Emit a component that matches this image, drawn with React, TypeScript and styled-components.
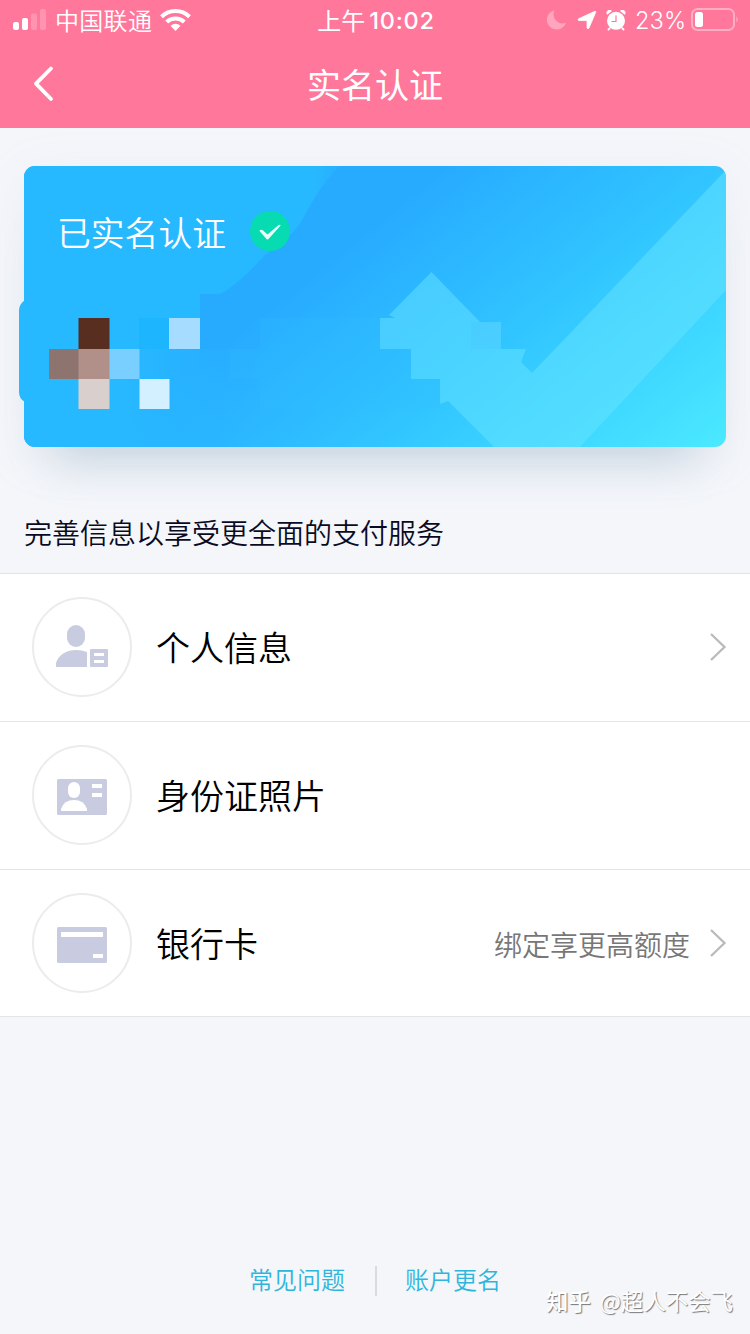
import React from "react";
import styled, { createGlobalStyle } from "styled-components";

const GlobalStyle = createGlobalStyle`
  * { box-sizing: border-box; }
  body {
    margin: 0;
    background: #f4f6fa;
    font-family: "Noto Sans CJK SC", sans-serif;
  }
`;

const Screen = styled.div`
  width: 750px;
  height: 1334px;
  display: flex;
  flex-direction: column;
  overflow: hidden;
  background: #f4f6fa;
`;

const Header = styled.header`
  height: 128px;
  flex: none;
  background: #ff779b;
  color: #fff;
`;

const StatusBar = styled.div`
  height: 40px;
  display: grid;
  grid-template-columns: 1fr auto 1fr;
  align-items: center;
  padding: 0 11px 0 13px;
`;

const StatusGroup = styled.div<{ $end?: boolean }>`
  display: flex;
  align-items: center;
  justify-content: ${(p) => (p.$end ? "flex-end" : "flex-start")};
`;

const Carrier = styled.span`
  margin: 0 8px 1px 9px;
  font-size: 24px;
  font-weight: 350;
  line-height: 36px;
  letter-spacing: 0.3px;
`;

const Clock = styled.span`
  display: flex;
  align-items: center;
  gap: 4px;
  margin-bottom: 1px;
  font-size: 24px;
  font-weight: 400;
  line-height: 36px;
`;

const Digits = styled.span`
  margin-top: 2px;
  font-family: Inter, "Noto Sans CJK SC", sans-serif;
  font-size: 23.5px;
  font-weight: 500;
  letter-spacing: 0.8px;
`;

const Battery = styled.span`
  margin: 2px 5px 0 9px;
  font-family: Inter, sans-serif;
  font-size: 23.6px;
  font-weight: 300;
  line-height: 36px;
`;

const NavBar = styled.nav`
  height: 88px;
  display: grid;
  grid-template-columns: 80px 1fr 80px;
  align-items: center;
`;

const BackButton = styled.button`
  display: flex;
  padding: 0 0 0 31px;
  border: 0;
  background: none;
`;

const Title = styled.h1`
  margin: 0;
  text-align: center;
  font-size: 34px;
  font-weight: 400;
  line-height: 48px;
`;

const Card = styled.section`
  display: grid;
  flex: none;
  height: 281px;
  margin: 38px 24px 0;
  border-radius: 11px;
  box-shadow: 0 42px 44px -30px rgba(105, 145, 175, 0.32),
    0 10px 50px rgba(175, 180, 200, 0.12);
`;

const CardArt = styled.svg`
  grid-area: 1 / 1;
  width: 707px;
  height: 281px;
  margin-left: -5px;
`;

const CardHeading = styled.div`
  grid-area: 1 / 1;
  z-index: 1;
  display: flex;
  align-items: center;
  align-self: start;
  gap: 24px;
  padding: 39px 0 0 33px;
  color: #fff;
`;

const CardTitle = styled.h2`
  margin: 2px 0 0;
  font-size: 33.8px;
  font-weight: 350;
  line-height: 50px;
`;

const Hint = styled.p`
  flex: none;
  height: 126px;
  margin: 0;
  padding: 63px 24px 0;
  color: #0a0b22;
  font-size: 28px;
  font-weight: 350;
  line-height: 44px;
`;

const List = styled.ul`
  flex: none;
  margin: 0;
  padding: 0;
  list-style: none;
  background: #fff;
  border-top: 1px solid #e1e3e6;
`;

const Row = styled.li`
  display: flex;
  align-items: center;
  height: 148px;
  padding: 0 23px 1px 32px;
  border-bottom: 1px solid #e4e5e8;

  &:last-child {
    height: 147px;
    padding-bottom: 0;
  }
`;

const IconRing = styled.span`
  display: flex;
  align-items: center;
  justify-content: center;
  width: 100px;
  height: 100px;
  border: 2px solid #ececef;
  border-radius: 50%;
`;

const RowLabel = styled.span`
  flex: 1;
  margin: 0 0 1px 24px;
  color: #000;
  font-size: 34px;
  font-weight: 350;
  line-height: 50px;
`;

const RowNote = styled.span`
  margin: 1px 19px 0 0;
  color: #777;
  font-size: 28px;
  font-weight: 350;
  line-height: 42px;
`;

const Footer = styled.footer`
  display: flex;
  justify-content: center;
  align-items: center;
  margin-top: 244px;
  height: 36px;
`;

const FooterLink = styled.a`
  color: #2fb5dc;
  font-size: 24px;
  line-height: 36px;
  font-weight: 350;
`;

const Divider = styled.span`
  width: 2px;
  height: 30px;
  margin: 3px 28px 0 30px;
  background: #d9dbe0;
`;

const Watermark = styled.div`
  display: flex;
  gap: 9px;
  justify-content: flex-end;
  margin-top: -14px;
  padding-right: 17px;
  color: #fff;
  font-size: 22.4px;
  line-height: 34px;
  text-shadow: 1px 1px 1px #777;
`;

const Brand = styled.span`
  font-weight: 500;
`;

const Signal = () => (
  <svg width="33" height="22" viewBox="0 0 33 22" fill="#fff">
    <rect x="0" y="13" width="6" height="8" rx="2" />
    <rect x="9" y="9" width="6" height="12" rx="2" />
    <rect x="18" y="4.500" width="6" height="16.500" rx="2" opacity=".22" />
    <rect x="27" y="0" width="6" height="21" rx="2" opacity=".22" />
  </svg>
);

const Wifi = () => (
  <svg width="31" height="22" viewBox="0 0 31 22" fill="none" stroke="#fff" strokeWidth="4">
    <path d="M1.500 7.800a20 20 0 0 1 28 0" />
    <path d="M6.700 13a12.500 12.500 0 0 1 17.600 0" />
    <path d="M15.500 22l-5-5.200q5-4 10 0z" fill="#fff" stroke="none" />
  </svg>
);

const Moon = () => (
  <svg width="20" height="22" viewBox="0 0 20 22">
    <path d="M7.500 1.200A9.800 9.800 0 1 0 19 13.800 9.200 9.200 0 0 1 7.500 1.200z" fill="#fff" opacity=".35" />
  </svg>
);

const Arrow = () => (
  <svg width="20" height="20" viewBox="0 0 20 20" style={{ marginLeft: 10 }}>
    <path d="M1.500 8.800L17.500 1.500q1.700-.6 1.100 1.100L12 18q-1.200 1.700-2-.2V10.600H2.100q-2-.4-.6-1.800z" fill="#fff" stroke="#fff" strokeWidth=".8" />
  </svg>
);

const Alarm = () => (
  <svg width="20" height="21" viewBox="0 0 20 21" style={{ marginLeft: 9 }}>
    <path d="M3.500 18.500L2.500 19.500M16.500 18.500l1 1" stroke="#fff" strokeWidth="2" strokeLinecap="round" />
    <path d="M1.200 4.800A3 3 0 0 1 6 1zM18.800 4.800A3 3 0 0 0 14 1z" fill="#fff" />
    <circle cx="10" cy="10.800" r="9" fill="#fff" />
    <path d="M10 5.500v6H5.500" fill="none" stroke="#ff779b" strokeWidth="1.200" />
  </svg>
);

const BatteryIcon = () => (
  <svg width="48" height="24" viewBox="0 0 48 24">
    <rect x="1" y="1" width="42" height="21" rx="5.500" fill="none" stroke="#fff" strokeWidth="2" opacity=".4" />
    <rect x="4" y="4" width="8" height="15" rx="2.500" fill="#fff" />
    <path d="M45.500 8.500q2.500 3 0 6z" fill="#fff" opacity=".5" />
  </svg>
);

const Back = () => (
  <svg width="24" height="38" viewBox="0 0 24 38" fill="none" stroke="#fff" strokeWidth="3.800" strokeLinecap="round" strokeLinejoin="round">
    <path d="M20 3.500L5 18.700l15 15.300" />
  </svg>
);

const Verified = () => (
  <svg width="40" height="40" viewBox="0 0 40 40">
    <circle cx="20" cy="20" r="20" fill="#06dbb1" />
    <path d="M9.500 20q.5-2 3-.9l5 4.300L28.600 14q2-.8 2 .6L18.500 28q-1 1-2 0z" fill="#e9fff9" />
  </svg>
);

const Chevron = () => (
  <svg width="18" height="30" viewBox="0 0 18 30" fill="none" stroke="#b9babd" strokeWidth="2.300">
    <path d="M2 2l13.500 13L2 28" />
  </svg>
);

const PersonIcon = () => (
  <svg width="52" height="42" viewBox="0 0 52 42" fill="#c9cce0" style={{ marginTop: -2 }}>
    <rect x="11" y="0" width="18" height="22" rx="9" />
    <path d="M0 42v-4C3 29 11 25 20 25q6 0 11 2v15z" />
    <path fillRule="evenodd" d="M35 24h16q1 0 1 1v16q0 1-1 1H35q-1 0-1-1V25q0-1 1-1zm3 4v3h10v-3zm0 7v3h10v-3z" />
  </svg>
);

const IdCardIcon = () => (
  <svg width="50" height="36" viewBox="0 0 50 36" style={{ marginTop: 4 }}>
    <rect width="50" height="36" rx="1.500" fill="#c9cce0" />
    <g fill="#fff">
      <rect x="11" y="3" width="12" height="16" rx="6" />
      <path d="M4 32v-2q3-9 13-9t13 9v2z" />
      <path d="M35 5h10v4H35zM35 14h10v4H35z" />
    </g>
  </svg>
);

const BankCardIcon = () => (
  <svg width="50" height="36" viewBox="0 0 50 36" style={{ marginTop: 4 }}>
    <rect width="50" height="36" rx="1.500" fill="#c9cce0" />
    <path d="M4 5h42v5H4zM36 27h10v4H36z" fill="#fff" />
  </svg>
);

const CardArtwork = () => (
  <CardArt viewBox="19 166 707 281">
    <defs>
      <linearGradient id="sky" gradientUnits="userSpaceOnUse" x1="380" y1="220" x2="626" y2="527">
        <stop offset="0" stopColor="#27abff" />
        <stop offset=".44" stopColor="#31c5ff" />
        <stop offset="1" stopColor="#4be9ff" />
      </linearGradient>
      <linearGradient id="fade" gradientUnits="userSpaceOnUse" x1="120" y1="0" x2="250" y2="0">
        <stop offset="0" stopColor="#27b9ff" />
        <stop offset="1" stopColor="#27b9ff" stopOpacity="0" />
      </linearGradient>
      <linearGradient id="edge" gradientUnits="userSpaceOnUse" x1="312" y1="0" x2="348" y2="0">
        <stop offset="0" stopColor="#27b9ff" />
        <stop offset="1" stopColor="#27b9ff" stopOpacity=".1" />
      </linearGradient>
      <clipPath id="cardShape">
        <rect x="24" y="166" width="702" height="281" rx="11" />
      </clipPath>
    </defs>
    <path d="M25 300q-6 4-6 11v81q0 7 6 10z" fill="#27b9ff" />
    <g clipPath="url(#cardShape)">
      <rect x="24" y="166" width="702" height="281" fill="url(#sky)" />
      <path d="M24 166H340C324 181 317 194 308 209C302 220 298 228 291 234L264 256C249 272 236 285 220 294H200V349H24z" fill="url(#edge)" />
      <rect x="24" y="349" width="226" height="98" fill="url(#fade)" />
      <g fill="#31c0ff" opacity=".2">
        <path d="M260 318h120v31h31v60H260v-30h-30v-30h30z" />
        <path d="M290 349h121v60H320v-30h-30z" />
        <path d="M320 379h120v30H320z" />
      </g>
      <path d="M389 315L431.500 272L480 322H501V349H526L521 362L532 373L726 170V290L580 447H494L448 401L440 404V379H411V349H380V318H395z" fill="#65e3ff" opacity=".5" />
      <path d="M471 322h30v27h-30z" fill="#42b8ff" opacity=".15" />
    </g>
    <rect x="139" y="318" width="30" height="31" fill="#1eb5ff" />
    <rect x="78.500" y="318" width="31" height="31" fill="#572e20" />
    <rect x="169" y="318" width="31" height="31" fill="#a6dcff" />
    <rect x="49" y="349" width="30" height="30" fill="#8d746f" />
    <rect x="78.500" y="349" width="31" height="30" fill="#b09088" />
    <rect x="109.500" y="349" width="30" height="30" fill="#79cfff" />
    <rect x="78.500" y="379" width="31" height="30" fill="#d9cfcd" />
    <rect x="139.500" y="379" width="30" height="30" fill="#d2f0ff" />
  </CardArt>
);

const rows = [
  { label: "个人信息", icon: <PersonIcon />, note: "", arrow: true },
  { label: "身份证照片", icon: <IdCardIcon />, note: "", arrow: false },
  { label: "银行卡", icon: <BankCardIcon />, note: "绑定享更高额度", arrow: true },
];

export default function App() {
  return (
    <Screen>
      <GlobalStyle />
      <Header>
        <StatusBar>
          <StatusGroup>
            <Signal />
            <Carrier>中国联通</Carrier>
            <Wifi />
          </StatusGroup>
          <Clock>
            上午<Digits>10:02</Digits>
          </Clock>
          <StatusGroup $end>
            <Moon />
            <Arrow />
            <Alarm />
            <Battery>23%</Battery>
            <BatteryIcon />
          </StatusGroup>
        </StatusBar>
        <NavBar>
          <BackButton aria-label="返回">
            <Back />
          </BackButton>
          <Title>实名认证</Title>
        </NavBar>
      </Header>
      <Card>
        <CardArtwork />
        <CardHeading>
          <CardTitle>已实名认证</CardTitle>
          <Verified />
        </CardHeading>
      </Card>
      <Hint>完善信息以享受更全面的支付服务</Hint>
      <List>
        {rows.map((row) => (
          <Row key={row.label}>
            <IconRing>{row.icon}</IconRing>
            <RowLabel>{row.label}</RowLabel>
            {row.note && <RowNote>{row.note}</RowNote>}
            {row.arrow && <Chevron />}
          </Row>
        ))}
      </List>
      <Footer>
        <FooterLink>常见问题</FooterLink>
        <Divider />
        <FooterLink>账户更名</FooterLink>
      </Footer>
      <Watermark>
        <Brand>知乎</Brand>
        <span>@超人不会飞</span>
      </Watermark>
    </Screen>
  );
}
